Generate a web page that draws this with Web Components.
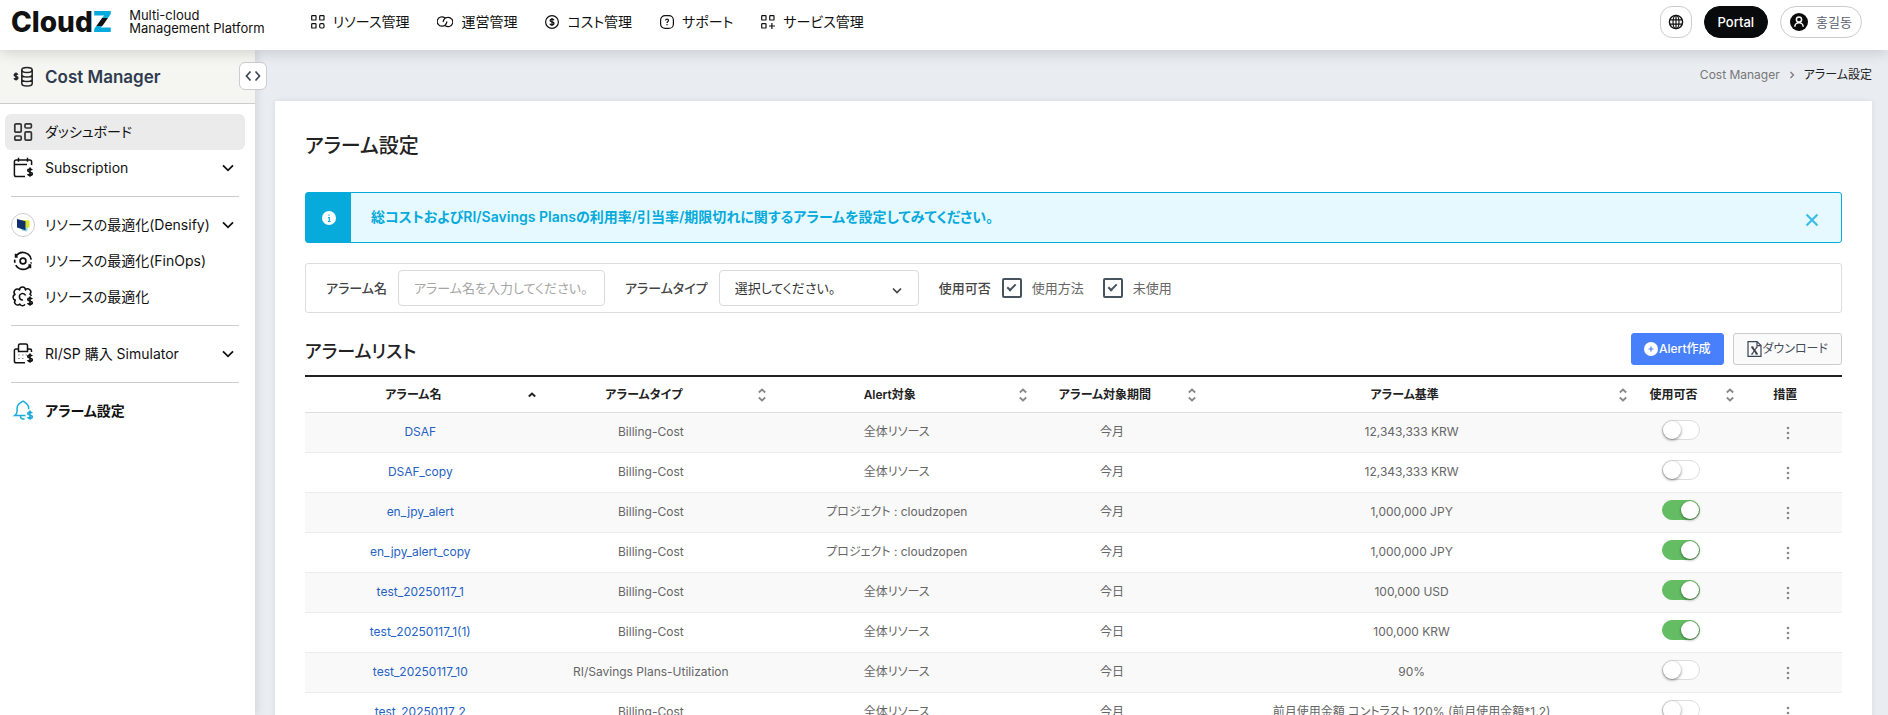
<!DOCTYPE html>
<html lang="ja">
<head>
<meta charset="utf-8">
<title>アラーム設定</title>
<style>
  html, body { height: 100%; }
  body {
    margin: 0;
    overflow: hidden;
    background: #e9ecf1;
    color: #222;
    font: 14px/20px Inter, "Noto Sans CJK JP", sans-serif;
    font-feature-settings: "palt";
  }
</style>
</head>
<body>

<cost-app>
  <app-header slot="header"></app-header>
  <side-nav slot="side" heading="Cost Manager">
    <nav-item icon="dashboard" active>ダッシュボード</nav-item>
    <nav-item icon="subscription" expandable>Subscription</nav-item>
    <hr>
    <nav-item icon="densify" expandable>リソースの最適化(Densify)</nav-item>
    <nav-item icon="finops">リソースの最適化(FinOps)</nav-item>
    <nav-item icon="optimize">リソースの最適化</nav-item>
    <hr>
    <nav-item icon="simulator" expandable>RI/SP 購入 Simulator</nav-item>
    <hr>
    <nav-item icon="alarm" current>アラーム設定</nav-item>
  </side-nav>
  <bread-crumbs parent="Cost Manager">アラーム設定</bread-crumbs>
  <page-card heading="アラーム設定">
    <notice-bar>総コストおよびRI/Savings Plansの利用率/引当率/期限切れに関するアラームを設定してみてください。</notice-bar>
    <filter-bar></filter-bar>
    <alarm-list heading="アラームリスト"></alarm-list>
  </page-card>
</cost-app>

<template id="cost-app">
  <style>
    :host { display: flex; flex-direction: column; height: 100vh; }
    .body { display: flex; flex: 1; min-height: 0; }
    main { flex: 1; min-width: 0; padding: 0 16px 0 20px; }
    ::slotted(app-header) { flex: none; position: relative; z-index: 3; }
    ::slotted(side-nav) { flex: none; position: relative; z-index: 2; }
  </style>
  <slot name="header"></slot>
  <div class="body">
    <slot name="side"></slot>
    <main><slot></slot></main>
  </div>
</template>

<template id="app-header">
  <style>
    :host {
      display: flex;
      align-items: center;
      box-sizing: border-box;
      height: 50px;
      padding: 0 26px 6px 11px;
      background: #fff;
      color: #111;
      box-shadow: 0 2px 14px rgba(0, 0, 0, .16);
    }
    .logo { display: flex; align-items: center; gap: 17px; color: inherit; text-decoration: none; }
    .mark { font: 800 28px/32px Inter, sans-serif; }
    .mark b {
      font-weight: 900;
      background: linear-gradient(#06aadb 37%, #111 37%, #111 63%, #06aadb 63%);
      -webkit-background-clip: text;
      background-clip: text;
      color: transparent;
    }
    .tag { display: flex; flex-direction: column; font-size: 13px; line-height: 13px; }
    nav { display: flex; gap: 28px; margin-left: 46px; }
    nav a { display: flex; align-items: center; gap: 8px; color: inherit; text-decoration: none; }
    .tools { display: flex; gap: 12px; margin-left: auto; }
    button {
      display: flex;
      align-items: center;
      justify-content: center;
      box-sizing: border-box;
      height: 32px;
      margin: 0;
      border: 1px solid #ccc;
      border-radius: 16px;
      background: #fff;
      color: #111;
      font: inherit;
    }
    .globe { width: 32px; padding: 0; border-radius: 12px; }
    .portal { padding: 0 13px; border-color: #080a0c; background: #080a0c; color: #fff; font-size: 13px; font-weight: 500; }
    .user { gap: 8px; padding: 0 9px; color: #596072; font: 13px/20px "Noto Sans CJK KR", sans-serif; }
  </style>
  <a class="logo" href="#">
    <span class="mark">Cloud<b>Z</b></span>
    <span class="tag"><span>Multi-cloud</span><span>Management Platform</span></span>
  </a>
  <nav>
    <a href="#"><ui-icon name="grid"></ui-icon>リソース管理</a>
    <a href="#"><ui-icon name="rings"></ui-icon>運営管理</a>
    <a href="#"><ui-icon name="dollar"></ui-icon>コスト管理</a>
    <a href="#"><ui-icon name="help"></ui-icon>サポート</a>
    <a href="#"><ui-icon name="gridplus"></ui-icon>サービス管理</a>
  </nav>
  <div class="tools">
    <button class="globe" aria-label="Language"><ui-icon name="globe"></ui-icon></button>
    <button class="portal">Portal</button>
    <button class="user"><ui-icon name="user"></ui-icon>홍길동</button>
  </div>
</template>

<template id="side-nav">
  <style>
    :host { display: block; width: 255px; background: #fff; box-shadow: 2px 0 8px rgba(0, 0, 0, .1); }
    header {
      display: flex;
      align-items: center;
      gap: 10px;
      box-sizing: border-box;
      height: 54px;
      padding-left: 11px;
      border-bottom: 1px solid #ccc;
      background: #f5f6f2;
    }
    h2 { margin: 0; color: #2f3b50; font-size: 17px; font-weight: 600; line-height: 24px; }
    nav { display: flex; flex-direction: column; padding: 10px 10px 10px 5px; }
    ::slotted(hr) { width: auto; height: 1px; margin: 10px 6px; border: 0; background: #ccc; }
    .fold {
      position: absolute;
      top: 12px;
      right: -12px;
      display: flex;
      align-items: center;
      justify-content: center;
      box-sizing: border-box;
      width: 28px;
      height: 28px;
      padding: 0;
      border: 1px solid #ccc;
      border-radius: 6px;
      background: #fff;
      color: #3c4656;
    }
  </style>
  <header><ui-icon name="coins"></ui-icon><h2></h2></header>
  <button class="fold" aria-label="メニュー"><ui-icon name="fold"></ui-icon></button>
  <nav><slot></slot></nav>
</template>

<template id="nav-item">
  <style>
    :host { display: block; color: #111; }
    a {
      display: flex;
      align-items: center;
      gap: 10px;
      height: 36px;
      padding: 0 11px 0 6px;
      border-radius: 6px;
      color: inherit;
      text-decoration: none;
      white-space: nowrap;
    }
    .label { flex: 1; }
    :host([active]) a { background: #ebebeb; }
    :host([current]) a { font-weight: 600; }
    :host([current]) .icon { color: #19abdc; }
    .chevron { display: none; }
    :host([expandable]) .chevron { display: block; }
  </style>
  <a href="#">
    <ui-icon class="icon"></ui-icon>
    <span class="label"><slot></slot></span>
    <ui-icon class="chevron" name="chevron"></ui-icon>
  </a>
</template>

<template id="bread-crumbs">
  <style>
    :host {
      display: flex;
      align-items: center;
      justify-content: flex-end;
      gap: 9px;
      box-sizing: border-box;
      height: 51px;
      padding-bottom: 2px;
      color: #222;
      font-size: 12px;
    }
    a { color: #777; text-decoration: none; }
    ui-icon { color: #777; }
  </style>
  <a href="#"></a><ui-icon name="next"></ui-icon><span><slot></slot></span>
</template>

<template id="page-card">
  <style>
    :host { display: block; padding: 30px; background: #fff; box-shadow: 0 0 6px rgba(0, 0, 0, .08); }
    h1 { margin: 0 0 31px; font-size: 20px; font-weight: 500; line-height: 30px; }
    .stack { display: flex; flex-direction: column; gap: 20px; }
  </style>
  <h1></h1>
  <div class="stack"><slot></slot></div>
</template>

<template id="notice-bar">
  <style>
    :host {
      display: flex;
      align-items: stretch;
      box-sizing: border-box;
      height: 51px;
      border: 1px solid #06aadb;
      border-radius: 3px;
      background: #e5f9ff;
      color: #06aadb;
    }
    .badge { display: flex; align-items: center; justify-content: center; width: 45px; background: #06aadb; }
    p { flex: 1; margin: 0; padding: 14px 20px; font-weight: 600; }
    button { align-self: center; display: flex; padding: 5px 22px 0; border: 0; background: none; color: #3dbde3; }
  </style>
  <span class="badge"><ui-icon name="info"></ui-icon></span>
  <p><slot></slot></p>
  <button aria-label="閉じる"><ui-icon name="close"></ui-icon></button>
</template>

<template id="filter-bar">
  <style>
    :host {
      display: flex;
      align-items: center;
      gap: 20px;
      padding: 6px 20px;
      border: 1px solid #ddd;
      border-radius: 3px;
      color: #444;
      font-size: 13px;
    }
    .field { display: flex; align-items: center; gap: 11px; }
    .field > label, .title { font-weight: 500; }
    .text, select {
      box-sizing: border-box;
      height: 36px;
      margin: 0;
      padding: 0 15px;
      border: 1px solid #d8dadc;
      border-radius: 4px;
      background: #fff;
      color: #333;
      font: inherit;
      font-feature-settings: inherit;
    }
    .text { width: 207px; }
    .text::placeholder { color: #a5a5a5; }
    .pick { display: grid; align-items: center; width: 200px; }
    .pick > * { grid-area: 1 / 1; }
    select { width: 100%; appearance: none; }
    .pick ui-icon { justify-self: end; margin-right: 17px; padding-top: 4px; pointer-events: none; }
    .check { display: flex; align-items: center; gap: 10px; margin-right: 8px; color: #666; }
    .field > .check { font-weight: 400; }
    .check input {
      display: grid;
      place-items: center;
      appearance: none;
      box-sizing: border-box;
      width: 20px;
      height: 20px;
      margin: 0;
      border: 2px solid #45545f;
      border-radius: 2px;
      background: #fff;
    }
    .check input:checked::after {
      content: "";
      width: 9px;
      height: 5px;
      margin-bottom: 3px;
      box-sizing: border-box;
      border: solid #45545f;
      border-width: 0 0 2px 2px;
      transform: rotate(-45deg);
    }
  </style>
  <div class="field">
    <label for="name">アラーム名</label>
    <input class="text" id="name" type="text" placeholder="アラーム名を入力してください。">
  </div>
  <div class="field">
    <label for="type">アラームタイプ</label>
    <div class="pick">
      <select id="type"><option>選択してください。</option></select>
      <ui-icon name="select"></ui-icon>
    </div>
  </div>
  <div class="field">
    <span class="title">使用可否</span>
    <label class="check"><input type="checkbox" checked>使用方法</label>
    <label class="check"><input type="checkbox" checked>未使用</label>
  </div>
</template>

<template id="alarm-list">
  <style>
    :host { display: block; }
    .head { display: flex; align-items: center; justify-content: space-between; margin-bottom: 10px; }
    h2 { margin: 0; padding-top: 6px; font-size: 18px; font-weight: 500; line-height: 26px; }
    .actions { display: flex; gap: 9px; }
    .actions button {
      display: flex;
      align-items: center;
      gap: 1px;
      box-sizing: border-box;
      height: 32px;
      padding: 0 13px;
      border: 1px solid #ccc;
      border-radius: 3px;
      background: #fafafa;
      color: #444d5c;
      font: inherit;
      font-size: 12px;
      font-feature-settings: inherit;
    }
    .actions .create { padding: 0 12px; border-color: #487ffb; background: #487ffb; color: #fff; font-weight: 500; }

    table { width: 100%; table-layout: fixed; border-collapse: separate; border-spacing: 0; border-top: 2px solid #222; font-size: 12px; }
    th, td { box-sizing: border-box; padding: 0; text-align: center; white-space: nowrap; }
    th { height: 36px; border-bottom: 1px solid #ddd; font-weight: 600; }
    th div { display: flex; align-items: center; gap: 6px; }
    th span { flex: 1; }
    th ui-icon { color: #888; }
    th .sorted { color: #222; }
    td { height: 40px; padding-bottom: 2px; border-bottom: 1px solid #ececec; color: #666; }
    tr:nth-child(odd) td { background: #f9f9f9; }
    td a { color: #2561c5; text-decoration: none; }
    td button { display: flex; margin: 0 auto; padding: 2px 10px 0; border: 0; background: none; color: #888; }

    .switch {
      display: block;
      appearance: none;
      box-sizing: border-box;
      width: 38px;
      height: 20px;
      margin: 0 auto 4px;
      border: 1px solid #ddd;
      border-radius: 10px;
      background: #fff;
    }
    .switch::before {
      content: "";
      display: block;
      width: 18px;
      height: 18px;
      border-radius: 50%;
      background: #fff;
      box-shadow: 0 1px 3px rgba(0, 0, 0, .5);
    }
    .switch:checked { border-color: #64bd63; background: #64bd63; }
    .switch:checked::before { margin-left: auto; }
  </style>
  <div class="head">
    <h2></h2>
    <div class="actions">
      <button class="create"><ui-icon name="plus"></ui-icon>Alert作成</button>
      <button><ui-icon name="excel"></ui-icon>ダウンロード</button>
    </div>
  </div>
  <table>
    <colgroup>
      <col style="width: 15%"><col style="width: 15%"><col style="width: 17%"><col style="width: 11%">
      <col style="width: 28%"><col style="width: 7%"><col style="width: 7%">
    </colgroup>
    <thead>
      <tr>
        <th><div><span>アラーム名</span><ui-icon class="sorted" name="asc"></ui-icon></div></th>
        <th><div><span>アラームタイプ</span><ui-icon name="sort"></ui-icon></div></th>
        <th><div><span>Alert対象</span><ui-icon name="sort"></ui-icon></div></th>
        <th><div><span>アラーム対象期間</span><ui-icon name="sort"></ui-icon></div></th>
        <th><div><span>アラーム基準</span><ui-icon name="sort"></ui-icon></div></th>
        <th><div><span>使用可否</span><ui-icon name="sort"></ui-icon></div></th>
        <th><div><span>措置</span><ui-icon name="blank"></ui-icon></div></th>
      </tr>
    </thead>
    <tbody></tbody>
  </table>
</template>

<script>
  // small dollar sign tucked into the corner of the side menu icons
  const DOLLAR = '<path d="M19.2 13.2c-.4-.8-1.2-1.2-2.2-1.2-1.3 0-2.2.6-2.2 1.5 0 2.1 4.5.9 4.5 3.2 0 .9-1 1.6-2.3 1.6-1.2 0-2-.5-2.3-1.3M17 10.6v9.2" stroke-width="1.7"/>';

  // name: [width, height, viewBox, markup]
  const ICONS = {
    grid: [14, 14, '0 0 14 14', '<rect x=".7" y=".7" width="4.3" height="4.3" rx=".6"/><rect x="8.7" y=".7" width="4.3" height="4.3" rx=".6"/><rect x=".7" y="8.7" width="4.3" height="4.3" rx=".6"/><rect x="8.7" y="8.7" width="4.3" height="4.3" rx="1.2"/>'],
    gridplus: [14, 14, '0 0 14 14', '<rect x=".7" y=".7" width="4.3" height="4.3" rx=".6"/><rect x="8.7" y=".7" width="4.3" height="4.3" rx=".6"/><rect x=".7" y="8.7" width="4.3" height="4.3" rx=".6"/><path d="M10.9 8v6M8 11h6"/>'],
    rings: [16, 14, '0 0 16 14', '<path d="M8 3A4.7 4.7 0 1 0 5.3 11.2C8 11.200 9.300 9.500 10 6.500"/><path d="M8 10.500A4.700 4.700 0 1 0 10.700 2.300C8 2.300 6.700 4 6 7"/>'],
    dollar: [14, 14, '0 0 14 14', '<circle cx="7" cy="7" r="6.4"/><path d="M9 5.2C8.6 4.500 8 4.200 7 4.200c-1.100 0-1.900.5-1.900 1.300C5.100 7.500 9 6.400 9 8.500c0 .8-.9 1.400-2 1.400s-1.800-.4-2.200-1.200M7 3v8" stroke-width="1.3"/>'],
    help: [14, 14, '0 0 14 14', '<rect x=".6" y=".6" width="12.8" height="12.8" rx="4.5"/><path d="M5.6 5.6C5.6 4.600 6.200 4.200 7 4.200s1.500.5 1.500 1.300C8.500 6.500 7 6.600 7 7.900M7 9v1.300"/>'],
    globe: [16, 16, '0 0 16 16', '<circle cx="8" cy="8" r="6.6" stroke-width="1.4"/><ellipse cx="8" cy="8" rx="3" ry="6.6"/><path d="M8 1.4v13.2M1.8 5.8h12.4M1.8 10.2h12.4"/>'],
    user: [18, 18, '0 0 18 18', '<circle cx="9" cy="9" r="9" fill="#0a0a0a" stroke="none"/><g stroke="#fff" stroke-width="1.5"><circle cx="9" cy="6.5" r="2.6"/><path d="M4.8 13.8c0-2.3 1.8-4 4.200-4s4.200 1.700 4.200 4"/></g>'],
    coins: [24, 24, '0 0 24 24', '<g stroke-width="1.5"><ellipse cx="16" cy="5" rx="5.2" ry="2.5"/><path d="M10.8 5v13.5c0 1.4 2.3 2.5 5.2 2.5s5.2-1.1 5.2-2.5V5M10.8 9.5C10.8 10.9 13.1 12 16 12s5.2-1.1 5.2-2.5M10.8 14c0 1.4 2.3 2.5 5.2 2.5s5.2-1.1 5.2-2.5"/><path d="M6.8 9.8C6.5 9.1 5.9 8.8 5 8.800c-1 0-1.800.5-1.800 1.300C3.200 12 6.900 11 6.900 13c0 .8-.8 1.400-1.900 1.400-1 0-1.700-.4-2-1.100M5 7.500v8"/></g>'],
    fold: [16, 12, '0 0 16 12', '<path d="M5.5 1.5 1.5 6l4 4.5M10.5 1.5l4 4.5-4 4.5" stroke-width="1.7"/>'],
    dashboard: [24, 20, '-2 0 24 20', '<g stroke="#333" stroke-width="1.7"><rect x="1.8" y="1.8" width="6.4" height="8.4" rx="1.2"/><rect x="12" y="1.8" width="6.4" height="4.2" rx="1.2"/><rect x="1.8" y="14" width="6.4" height="4.2" rx="1.2"/><rect x="12" y="9.8" width="6.4" height="8.4" rx="1.2"/></g>'],
    subscription: [24, 22, '-2 0 24 22', '<path d="M12 19.5H3.2a1.8 1.8 0 0 1-1.8-1.8V4.800A1.800 1.800 0 0 1 3.200 3h13.600a1.800 1.800 0 0 1 1.800 1.800V8M1.400 7.500H14M5.500.8v4M14.500.8v4" stroke-width="1.5"/>' + DOLLAR],
    densify: [24, 24, '0 0 24 24', '<circle cx="12" cy="12" r="11.5" stroke="#ccc" stroke-width="1" fill="#fff"/><path d="M11 7 18.5 7.5V14.5L13 15z" fill="#dce425" stroke="none"/><path d="M9 14 17 14.5 16 18.5 11 17.5z" fill="#8ed6dc" stroke="none"/><path d="M6 6l8.5 2.3v9L6 14.5z" fill="#10316b" stroke="none"/>'],
    finops: [24, 20, '-2 0 24 20', '<g stroke-width="1.7"><circle cx="10" cy="10" r="2.9"/><path d="M3.2 5A8.3 8.3 0 0 1 18.2 8.7M1.8 8.7a8.3 8.3 0 0 0 .1 3M16.8 15A8.3 8.3 0 0 1 2.8 14.2M18.2 11.3a8.3 8.3 0 0 1-.3 1.2M2.6 2.8v3h2M17.4 17.2v-3h-2"/></g>'],
    optimize: [24, 22, '-2 0 24 22', '<path d="M12 18.3A2.9 2.9 0 0 1 6.9 18A2.9 2.9 0 0 1 2.4 14.1A2.9 2.9 0 0 1 2.1 8.5A2.9 2.9 0 0 1 6.6 3.9A2.9 2.9 0 0 1 12.4 3.9A2.9 2.9 0 0 1 16.9 8.2Q18 8.8 18.3 10" stroke-width="1.5" stroke-linejoin="round"/><path d="M12.6 9.6A3.2 3.2 0 1 0 10 13.9" stroke-width="1.5"/>' + DOLLAR],
    simulator: [24, 22, '-2 0 24 22', '<path d="M12 19.8H3.2a1.8 1.8 0 0 1-1.8-1.8V7.500a1.500 1.500 0 0 1 1.500-1.500H5.500V2.600A1.600 1.600 0 0 1 7.100 1h5.800a1.600 1.600 0 0 1 1.600 1.600V6H17a1.500 1.500 0 0 1 1.500 1.500V9M5.500 6v2.500h9V6" stroke-width="1.5"/><path d="M5.2 12h1.5M9 12h1.5M12.5 12H14M5.2 15.5h1.5M9 15.5h1.5" stroke="#888"/>' + DOLLAR],
    alarm: [24, 22, '-2 0 24 22', '<path d="M12.5 15.5H1.800c1.500-1 2.300-2.500 2.300-4.500V8c0-2.500 2.300-4.800 5.900-6.800 3.500 2 5.700 4.300 5.700 6.800v1.200M7.500 16c0 1.800.8 3 2.500 3h1.600" stroke-width="1.5"/>' + DOLLAR],
    chevron: [12, 8, '0 0 12 8', '<path d="M1 1.3l5 5 5-5" stroke-width="1.8"/>'],
    select: [10, 7, '0 0 10 7', '<path d="M1 1.5l4 4 4-4" stroke-width="1.7"/>'],
    next: [6, 8, '0 0 6 8', '<path d="M1.5 1l3 3-3 3"/>'],
    info: [14, 14, '0 0 14 14', '<circle cx="7" cy="7" r="7" fill="#fff" stroke="none"/><path d="M6 6.5h1.3v4M5.8 10.5h2.8M7 3.5v1.3" stroke="#06aadb"/>'],
    close: [14, 14, '0 0 14 14', '<path d="M1.5 1.5l11 11M12.5 1.5l-11 11" stroke-width="2.2"/>'],
    plus: [14, 14, '0 0 14 14', '<circle cx="7" cy="7" r="7" fill="#fff" stroke="none"/><path d="M7 4.5v5M4.5 7h5" stroke="#487ffb"/>'],
    excel: [15, 16, '0 0 15 16', '<g stroke="#3a4454"><path d="M1 .6h9l4 4v10.8H1zM10 .6v4h4"/><path d="M5 6l5 7" stroke-width="2"/><path d="M10 6l-5 7M4 6h2.5M8.8 6h2M4 13h2.2M8.5 13H11"/></g>'],
    asc: [8, 14, '0 0 8 14', '<path d="M.8 8.5 4 5.5l3.2 3" stroke-width="2"/>'],
    sort: [8, 14, '0 0 8 14', '<path d="M.8 4.5 4 1.5l3.2 3M.8 9.5l3.2 3 3.2-3" stroke-width="1.8"/>'],
    blank: [0, 14, '0 0 1 14', ''],
    more: [4, 14, '0 0 4 14', '<g fill="currentColor" stroke="none"><circle cx="2" cy="2" r="1.3"/><circle cx="2" cy="7" r="1.3"/><circle cx="2" cy="12" r="1.3"/></g>'],
  };

  const ALARMS = [
    ['DSAF', 'Billing-Cost', '全体リソース', '今月', '12,343,333 KRW', false],
    ['DSAF_copy', 'Billing-Cost', '全体リソース', '今月', '12,343,333 KRW', false],
    ['en_jpy_alert', 'Billing-Cost', 'プロジェクト : cloudzopen', '今月', '1,000,000 JPY', true],
    ['en_jpy_alert_copy', 'Billing-Cost', 'プロジェクト : cloudzopen', '今月', '1,000,000 JPY', true],
    ['test_20250117_1', 'Billing-Cost', '全体リソース', '今日', '100,000 USD', true],
    ['test_20250117_1(1)', 'Billing-Cost', '全体リソース', '今日', '100,000 KRW', true],
    ['test_20250117_10', 'RI/Savings Plans-Utilization', '全体リソース', '今日', '90%', false],
    ['test_20250117_2', 'Billing-Cost', '全体リソース', '今月', '前月使用金額 コントラスト 120% (前月使用金額*1.2)', false],
  ];

  class UiIcon extends HTMLElement {
    connectedCallback() {
      const [width, height, box, markup] = ICONS[this.getAttribute('name')];
      const root = this.attachShadow({ mode: 'open' });
      root.innerHTML = `
        <style>
          :host { display: inline-block; flex: none; line-height: 0; }
          svg { display: block; fill: none; stroke: currentColor; stroke-width: 1.2; }
        </style>
        <svg width="${width}" height="${height}" viewBox="${box}" aria-hidden="true">${markup}</svg>`;
    }
  }

  // clones the template that has the same id as the tag
  class TemplateElement extends HTMLElement {
    connectedCallback() {
      const template = document.getElementById(this.localName);
      this.root = this.attachShadow({ mode: 'open' });
      this.root.appendChild(template.content.cloneNode(true));
      this.render();
    }

    render() {
      const heading = this.root.querySelector('h1, h2');
      if (heading) heading.textContent = this.getAttribute('heading');
    }
  }

  class NavItem extends TemplateElement {
    render() {
      // the name has to be there before the icon is upgraded
      const icon = document.createElement('ui-icon');
      icon.className = 'icon';
      icon.setAttribute('name', this.getAttribute('icon'));
      this.root.querySelector('.icon').replaceWith(icon);
    }
  }

  class BreadCrumbs extends TemplateElement {
    render() {
      this.root.querySelector('a').textContent = this.getAttribute('parent');
    }
  }

  class AlarmList extends TemplateElement {
    render() {
      super.render();
      this.root.querySelector('tbody').innerHTML = ALARMS.map(([name, type, target, period, limit, on]) => `
        <tr>
          <td><a href="#">${name}</a></td>
          <td>${type}</td>
          <td>${target}</td>
          <td>${period}</td>
          <td>${limit}</td>
          <td><input class="switch" type="checkbox" role="switch" aria-label="${name}" ${on ? 'checked' : ''}></td>
          <td><button aria-label="${name} 措置"><ui-icon name="more"></ui-icon></button></td>
        </tr>`).join('');
    }
  }

  ['cost-app', 'app-header', 'side-nav', 'page-card', 'notice-bar', 'filter-bar'].forEach((tag) => {
    customElements.define(tag, class extends TemplateElement {});
  });
  customElements.define('nav-item', NavItem);
  customElements.define('bread-crumbs', BreadCrumbs);
  customElements.define('alarm-list', AlarmList);
  customElements.define('ui-icon', UiIcon);
</script>
</body>
</html>
